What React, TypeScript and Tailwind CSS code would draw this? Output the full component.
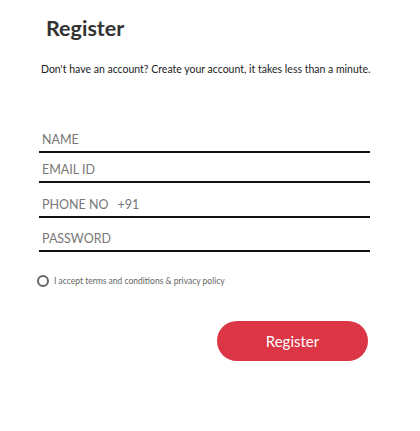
import { useState } from "react";

const FIELDS = [
  { key: "name", label: "NAME", type: "text", mt: "mt-[55px]" },
  { key: "email", label: "EMAIL ID", type: "email", mt: "mt-[8px]" },
  { key: "phone", label: "PHONE NO", type: "tel", mt: "mt-[13px]" },
  { key: "password", label: "PASSWORD", type: "password", mt: "mt-[12px]" },
];

export default function App() {
  const [values, setValues] = useState<Record<string, string>>({});
  const [accepted, setAccepted] = useState(false);

  const update = (key: string, value: string) => setValues({ ...values, [key]: value });

  return (
    <div className="w-[420px] h-[431px] bg-white font-['Lato',sans-serif] text-[#333]">
      <div className="pl-[41px] pr-[50px] pt-[13px]">
        <h1 className="pl-[5px] text-[21.5px] font-bold leading-[30px] text-[#333]">Register</h1>
        <p className="mt-[19px] whitespace-nowrap text-[10.5px] leading-[14px] text-[#222]">
          Don't have an account? Create your account, it takes less than a minute.
        </p>

        {FIELDS.map((f) => (
          <div key={f.key} className={`${f.mt} -ml-[2px] flex items-end border-b-2 border-[#111] pb-[2px]`}>
            {f.key === "phone" ? (
              <>
                <span className="shrink-0 whitespace-nowrap pl-[3px] text-[12.5px] leading-[18px] text-[#777]">{f.label}</span>
                <input
                  type="tel"
                  placeholder="+91"
                  value={values.phone || ""}
                  onChange={(e) => update("phone", e.target.value)}
                  className="ml-[9px] h-[18px] w-full min-w-0 bg-transparent text-[12.5px] leading-[18px] text-[#333] outline-none placeholder:text-[#777]"
                />
              </>
            ) : (
              <input
                type={f.type}
                placeholder={f.label}
                value={values[f.key] || ""}
                onChange={(e) => update(f.key, e.target.value)}
                className="h-[18px] w-full bg-transparent pl-[3px] text-[12.5px] leading-[18px] text-[#333] outline-none placeholder:text-[#777]"
              />
            )}
          </div>
        ))}

        <label className="mt-[23px] -ml-[4px] flex cursor-pointer items-center gap-[5px]">
          <span
            onClick={() => setAccepted(!accepted)}
            className={`h-[12px] w-[12px] rounded-full border-2 border-[#666] ${accepted ? "bg-[#dc3545]" : ""}`}
          />
          <span className="text-[8.5px] leading-[12px] text-[#666]">I accept terms and conditions &amp; privacy policy</span>
        </label>

        <div className="mt-[34px] flex justify-end pr-[2px]">
          <button className="h-[40px] w-[151px] rounded-full bg-[#dc3545] text-[15px] text-white">Register</button>
        </div>
      </div>
    </div>
  );
}
